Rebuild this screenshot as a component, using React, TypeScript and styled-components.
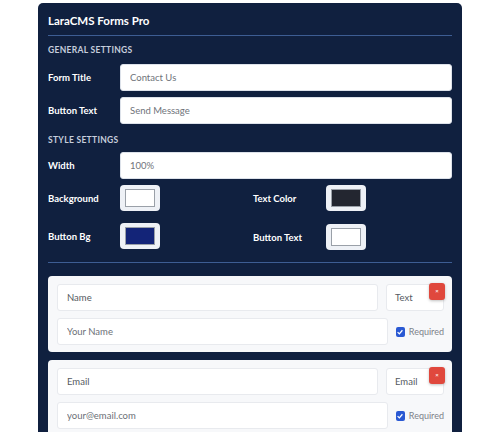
import React from "react";
import styled, { createGlobalStyle } from "styled-components";

const GlobalStyle = createGlobalStyle`
    * { box-sizing: border-box; }
    body {
        margin: 0;
        background: #ffffff;
        font-family: Lato, "Open Sans", sans-serif;
    }
`;

const Panel = styled.div`
    width: 424px;
    margin: 3px auto 0;
    min-height: 429px;
    padding: 0 10px;
    background: #10203f;
    border-radius: 5px 5px 0 0;
`;

const Title = styled.h2`
    margin: 0;
    padding: 10px 0 7px;
    font-size: 11.5px;
    line-height: 15px;
    font-weight: 700;
    color: #ffffff;
    border-bottom: 1px solid #3d5d93;
`;

const SectionLabel = styled.div<{ $top: number; $bottom: number }>`
    padding: ${(p) => p.$top}px 0 ${(p) => p.$bottom}px;
    font-size: 8.5px;
    line-height: 10px;
    font-weight: 700;
    letter-spacing: 0.3px;
    text-transform: uppercase;
    color: #c6cedd;
`;

const FieldRow = styled.div`
    display: flex;
    align-items: center;
    margin-bottom: 6px;
`;

const Label = styled.label<{ $width?: number }>`
    width: ${(p) => p.$width ?? 72}px;
    flex-shrink: 0;
    font-size: 9.5px;
    font-weight: 700;
    color: #ffffff;
`;

const TextInput = styled.input`
    flex: 1;
    min-width: 0;
    height: 27px;
    padding: 0 9px;
    border: 1px solid #dde2ea;
    border-radius: 3px;
    background: #ffffff;
    font-family: inherit;
    font-size: 9.5px;
    color: #6f737a;
    outline: none;
    &::placeholder { color: #8a8e95; }
`;

const ColorGrid = styled.div`
    display: grid;
    grid-template-columns: 1fr 1fr;
    column-gap: 6px;
    row-gap: 11px;
    padding: 0 0 12px;
    border-bottom: 1px solid #3d5d93;
`;

const ColorItem = styled.div<{ $offset?: number }>`
    display: flex;
    align-items: center;
    margin-top: ${(p) => p.$offset ?? 0}px;
`;

const Swatch = styled.div`
    width: 40px;
    height: 26px;
    padding: 4px 5px;
    background: #eef1f6;
    border-radius: 4px;
`;

const SwatchFill = styled.div<{ $color: string }>`
    width: 100%;
    height: 100%;
    background: ${(p) => p.$color};
    border: 1px solid #9aa0a8;
`;

const Cards = styled.div`
    display: flex;
    flex-direction: column;
    gap: 8px;
    padding-top: 13px;
`;

const Card = styled.div`
    position: relative;
    display: flex;
    flex-direction: column;
    gap: 7px;
    padding: 8px 8px 7px 9px;
    background: #f7f8fa;
    border-radius: 4px;
`;

const CardRow = styled.div`
    display: flex;
    align-items: center;
    gap: 8px;
`;

const CardInput = styled(TextInput)`
    border-color: #e8eaee;
    color: #555a61;
    &::placeholder { color: #6c7077; }
`;

const TypeSelect = styled.div`
    width: 58px;
    height: 27px;
    display: flex;
    align-items: center;
    padding: 0 8px;
    background: #ffffff;
    border: 1px solid #e8eaee;
    border-radius: 3px;
    font-size: 9.5px;
    color: #555a61;
`;

const RemoveButton = styled.button`
    position: absolute;
    top: 7px;
    right: 7px;
    width: 16px;
    height: 17px;
    padding: 0;
    border: none;
    border-radius: 3px;
    background: #e0483d;
    color: #ffffff;
    font-size: 6px;
    line-height: 17px;
    box-shadow: 0 1px 3px rgba(0, 0, 0, 0.25);
`;

const Required = styled.label`
    display: flex;
    align-items: center;
    gap: 4px;
    width: 48px;
    font-size: 9px;
    color: #7d8189;
`;

const CheckBox = styled.span`
    width: 10px;
    height: 10px;
    display: flex;
    align-items: center;
    justify-content: center;
    background: #2a59d3;
    border-radius: 2px;
`;

interface FieldDef {
    label: string;
    type: string;
    placeholder: string;
}

const fields: FieldDef[] = [
    { label: "Name", type: "Text", placeholder: "Your Name" },
    { label: "Email", type: "Email", placeholder: "your@email.com" },
];

function ColorPick({ label, color, labelWidth, offset }: { label: string; color: string; labelWidth?: number; offset?: number }) {
    return (
        <ColorItem $offset={offset}>
            <Label $width={labelWidth}>{label}</Label>
            <Swatch>
                <SwatchFill $color={color} />
            </Swatch>
        </ColorItem>
    );
}

function App() {
    return (
        <>
            <GlobalStyle />
            <Panel>
                <Title>LaraCMS Forms Pro</Title>

                <SectionLabel $top={9} $bottom={9}>General Settings</SectionLabel>
                <FieldRow>
                    <Label>Form Title</Label>
                    <TextInput defaultValue="Contact Us" />
                </FieldRow>
                <FieldRow>
                    <Label>Button Text</Label>
                    <TextInput defaultValue="Send Message" />
                </FieldRow>

                <SectionLabel $top={5} $bottom={7}>Style Settings</SectionLabel>
                <FieldRow>
                    <Label>Width</Label>
                    <TextInput defaultValue="100%" />
                </FieldRow>
                <ColorGrid>
                    <ColorPick label="Background" color="#ffffff" />
                    <ColorPick label="Text Color" color="#232630" labelWidth={73} />
                    <ColorPick label="Button Bg" color="#132478" />
                    <ColorPick label="Button Text" color="#ffffff" labelWidth={73} offset={2} />
                </ColorGrid>

                <Cards>
                    {fields.map((f) => (
                        <Card key={f.label}>
                            <CardRow>
                                <CardInput defaultValue={f.label} />
                                <TypeSelect>{f.type}</TypeSelect>
                            </CardRow>
                            <CardRow>
                                <CardInput placeholder={f.placeholder} />
                                <Required>
                                    <CheckBox>
                                        <svg width="8" height="8" viewBox="0 0 10 10">
                                            <path d="M2 5.2 L4.2 7.3 L8 2.8" fill="none" stroke="#fff" strokeWidth="1.6" />
                                        </svg>
                                    </CheckBox>
                                    Required
                                </Required>
                            </CardRow>
                            <RemoveButton>×</RemoveButton>
                        </Card>
                    ))}
                </Cards>
            </Panel>
        </>
    );
}

export default App;
